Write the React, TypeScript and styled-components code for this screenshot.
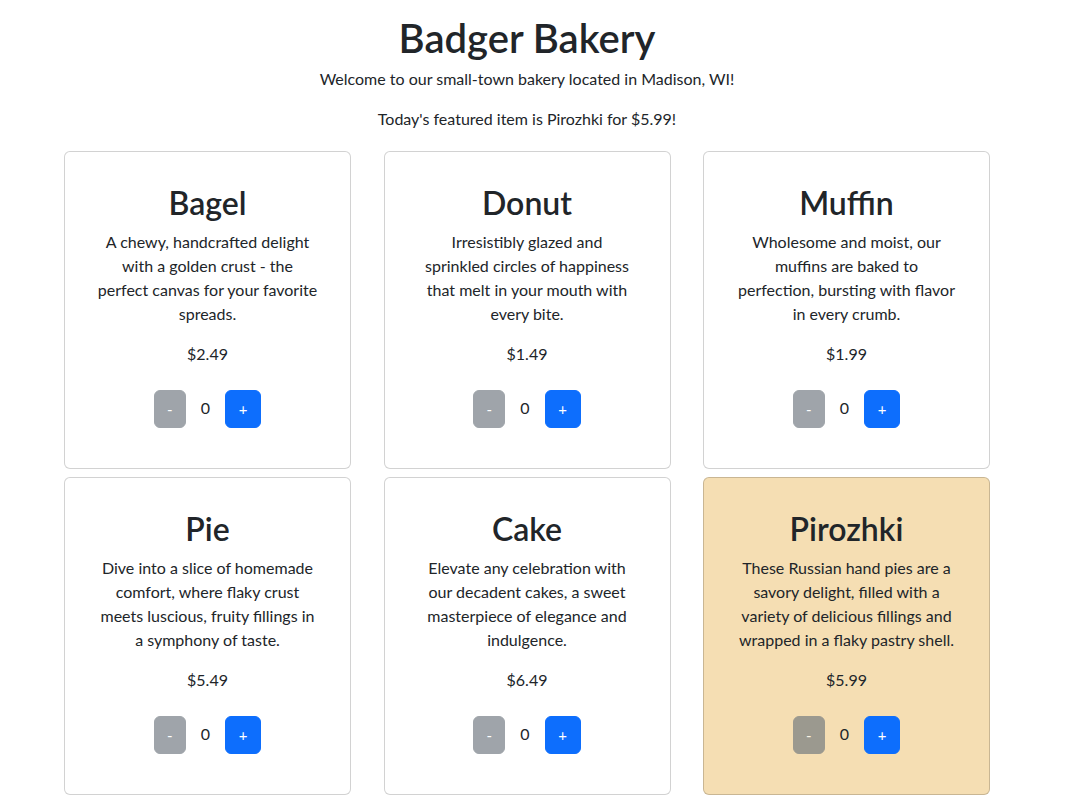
import * as React from "react"
import styled, { createGlobalStyle } from "styled-components"

const GlobalStyle = createGlobalStyle`
  body {
    margin: 0;
    background: #ffffff;
    color: #212529;
    font-family: Lato, "Noto Sans", sans-serif;
    font-size: 16px;
    line-height: 1.5;
  }
`

const Page = styled.div`
  width: 1054px;
`

const Container = styled.div`
  width: 960px;
  margin: 0 auto;
  text-align: center;
`

const Title = styled.h1`
  margin: 14px 0 5px;
  font-size: 40px;
  font-weight: 600;
  line-height: 48px;
`

const Lead = styled.p`
  margin: 0 0 16px;
`

const Grid = styled.div`
  display: grid;
  grid-template-columns: repeat(3, 287px);
  column-gap: 32.5px;
  row-gap: 8px;
  justify-content: center;
  margin-top: 20px;
`

const Card = styled.div<{ $featured?: boolean }>`
  box-sizing: border-box;
  height: 318px;
  padding: 32px;
  border: 1px solid rgba(0, 0, 0, 0.175);
  border-radius: 6px;
  background: ${(p) => (p.$featured ? "#f5deb3" : "#ffffff")};
`

const CardTitle = styled.h2`
  margin: 0 0 8px;
  font-size: 32px;
  font-weight: 600;
  line-height: 38px;
`

const Text = styled.p`
  margin: 0 0 16px;
`

const Controls = styled.div`
  display: flex;
  align-items: center;
  justify-content: center;
  margin-top: 24px;
`

const Count = styled.span`
  margin: 0 15px 2px;
`

const Button = styled.button<{ $variant: "secondary" | "primary" }>`
  height: 38px;
  padding: 0 12px;
  border: 1px solid ${(p) => (p.$variant === "primary" ? "#0d6efd" : "#6c757d")};
  border-radius: 6px;
  background: ${(p) => (p.$variant === "primary" ? "#0d6efd" : "#6c757d")};
  color: #ffffff;
  font-family: inherit;
  font-size: 15px;
  opacity: ${(p) => (p.$variant === "secondary" ? 0.65 : 1)};
`

const Minus = styled(Button)`
  min-width: 32px;
`

const Plus = styled(Button)`
  min-width: 36px;
`

const items = [
  { name: "Bagel", lines: ["A chewy, handcrafted delight", "with a golden crust - the", "perfect canvas for your favorite", "spreads."], price: 2.49 },
  { name: "Donut", lines: ["Irresistibly glazed and", "sprinkled circles of happiness", "that melt in your mouth with", "every bite."], price: 1.49 },
  { name: "Muffin", lines: ["Wholesome and moist, our", "muffins are baked to", "perfection, bursting with flavor", "in every crumb."], price: 1.99 },
  { name: "Pie", lines: ["Dive into a slice of homemade", "comfort, where flaky crust", "meets luscious, fruity fillings in", "a symphony of taste."], price: 5.49 },
  { name: "Cake", lines: ["Elevate any celebration with", "our decadent cakes, a sweet", "masterpiece of elegance and", "indulgence."], price: 6.49 },
  { name: "Pirozhki", lines: ["These Russian hand pies are a", "savory delight, filled with a", "variety of delicious fillings and", "wrapped in a flaky pastry shell."], price: 5.99 },
]

const featured = "Pirozhki"

export default function App() {
  return (
    <Page>
      <GlobalStyle />
      <Container>
        <Title>Badger Bakery</Title>
        <Lead>Welcome to our small-town bakery located in Madison, WI!</Lead>
        <Lead>Today's featured item is Pirozhki for $5.99!</Lead>
        <Grid>
          {items.map((item) => (
            <Card key={item.name} $featured={item.name === featured}>
              <CardTitle>{item.name}</CardTitle>
              <Text>
                {item.lines.map((line, i) => (
                  <React.Fragment key={i}>
                    {i > 0 && <br />}
                    {line}
                  </React.Fragment>
                ))}
              </Text>
              <Text>${item.price.toFixed(2)}</Text>
              <Controls>
                <Minus $variant="secondary" disabled>-</Minus>
                <Count>0</Count>
                <Plus $variant="primary">+</Plus>
              </Controls>
            </Card>
          ))}
        </Grid>
      </Container>
    </Page>
  )
}
